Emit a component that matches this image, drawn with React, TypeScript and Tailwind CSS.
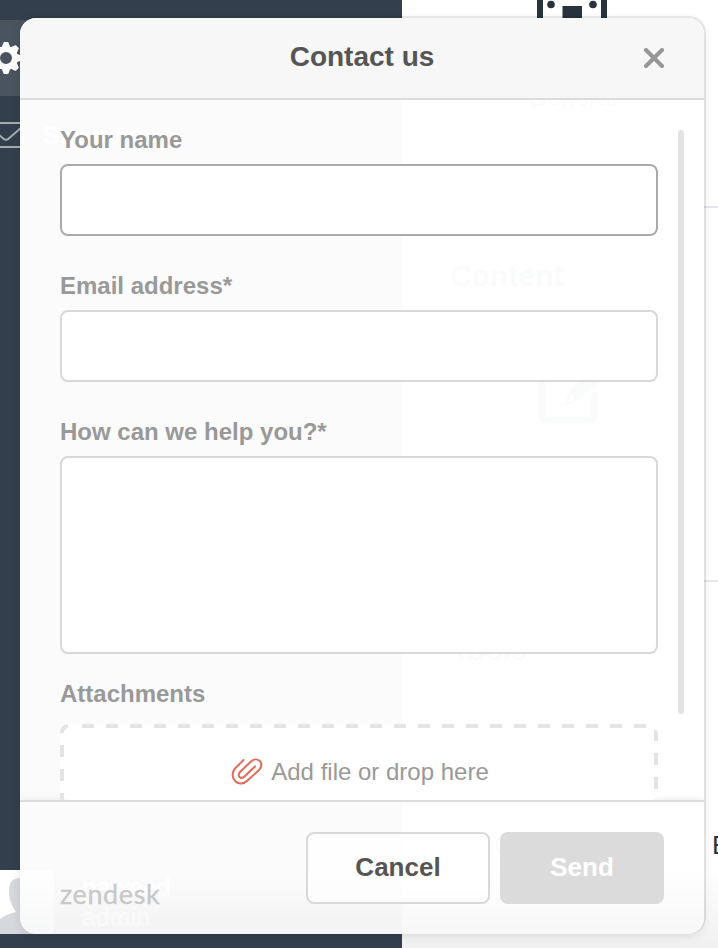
import React from "react";

const TEETH = [0, 45, 90, 135, 180, 225, 270, 315];

function Gear() {
  return (
    <svg className="block" width="32" height="32" viewBox="-16 -16 32 32" fill="#fff">
      <circle r="9" fill="none" stroke="#fff" strokeWidth="6" />
      {TEETH.map((angle) => (
        <path key={angle} d="M-4.500-10L-2.600-15.300Q-2.300-16-1.600-16H1.600Q2.300-16 2.600-15.300L4.500-10Z" transform={`rotate(${angle})`} />
      ))}
    </svg>
  );
}

function Sidebar() {
  return (
    <aside className="flex h-full w-[402px] shrink-0 flex-col bg-[#333f4d] pt-5 text-white">
      <div className="flex h-[76px] items-center bg-[#4a545f]">
        <div className="-ml-[10px]">
          <Gear />
        </div>
      </div>
      <div className="flex h-[78px] items-center">
        <svg className="-ml-[12px] block" width="36" height="26" viewBox="0 0 36 26" fill="none" stroke="#a5abb3" strokeWidth="2">
          <rect x="1" y="1" width="34" height="24" />
          <path d="M2 5L15.500 16.800Q18 18.500 20.500 16.800L34 5" />
        </svg>
        <span className="ml-[18px] text-[26px] font-bold">Support</span>
      </div>
      <div className="mt-auto mb-[14px] flex h-16">
        <svg className="block rounded-r-md bg-white" width="54" height="64" viewBox="0 0 54 64" fill="#d5d8dd">
          <path d="M20 8C12 8 9 13 9 21C9 31 12 36 16 42C11 43 5 45 0 49V64H54V55C45 49 37 45 29 41C32 36 34 30 34 21C34 13 29 8 20 8Z" />
        </svg>
        <div className="ml-7 flex flex-col pt-0.5 text-[25px] leading-[30px]">
          <b className="tracking-[-0.5px]">naweed</b>
          <span>admin</span>
        </div>
      </div>
    </aside>
  );
}

function Dashboard() {
  return (
    <main className="flex min-w-0 flex-1 flex-col bg-white text-[#29323f]">
      <section className="h-[208px] shrink-0 border-b-2 border-[#e6e6ee] pl-[135px]">
        <svg className="block" width="70" height="62" viewBox="0 0 70 62" fill="#29323f">
          <path d="M0 0H6V56H64V0H70V62H0Z" />
          <circle cx="14" cy="4.5" r="3.8" />
          <circle cx="56" cy="4.5" r="3.8" />
          <path d="M25.500 6H45V24H25.500Z" />
        </svg>
        <div className="-ml-[9px] pt-5 text-[25px] leading-[30px]">General</div>
      </section>
      <section className="h-[374px] shrink-0 border-b-2 border-[#e6e6ee] pl-12">
        <h2 className="pt-[50px] text-[30px] leading-9 font-bold">Content</h2>
        <svg className="mt-[70px] ml-[88px] block" width="66" height="60" viewBox="0 0 66 60">
          <path d="M44 4H10Q4 4 4 10V50Q4 56 10 56H50Q56 56 56 50V28" fill="none" stroke="#29323f" strokeWidth="7" />
          <path d="M26 42L31 28L52 7L62 16L40 37Z" fill="#29323f" />
          <path d="M29 38L33 30L38 35Z" fill="#fff" />
        </svg>
      </section>
      <section className="flex-1 pt-[50px] pl-[50px]">
        <h2 className="text-[29px] leading-9 font-bold">Tools</h2>
        <div className="mt-[161px] ml-[42px] flex w-[400px] gap-[151px] text-[26px] leading-8">
          <span className="w-[66px]">Code</span>
          <span className="ml-px">Export</span>
        </div>
      </section>
    </main>
  );
}

function Field({ label, active, tall }: { label: string; active?: boolean; tall?: boolean }) {
  return (
    <label className="block">
      <span className="block h-[38px] text-[24px] leading-[28px] font-bold text-[#999]">{label}</span>
      <span
        className={`block w-[598px] rounded-lg border-2 bg-white ${active ? "border-[#aaa]" : "border-[#d8d8d8]"} ${
          tall ? "h-[198px]" : "h-[72px]"
        }`}
      />
    </label>
  );
}

function Paperclip() {
  return (
    <svg className="block" width="32" height="28" viewBox="0 0 32 28" fill="none" stroke="#e26b5a" strokeWidth="2" strokeLinecap="round" strokeLinejoin="round">
      <path d="M12.500 2L4 10.500C.6 14.500 1 20.500 4.500 23.500C8 26.500 13 26 16.500 22.500L28 12C31 9 31 5 28.500 2.800C26 .7 22.500 1 20 3.500L9.500 13.500C7 16 7.500 18 8.600 19C10 20.200 12 20 13.500 18.500L24 8.500" />
    </svg>
  );
}

function AttachmentZone() {
  return (
    <div className="relative flex h-[96px] w-[598px] justify-center rounded-lg bg-white pt-[33px] pl-0.5">
      <svg className="absolute inset-0" width="598" height="96" viewBox="0 0 598 96" fill="none" stroke="#e4e4e4" strokeWidth="4">
        <path d="M2 9Q2 3 8 2" />
        <path d="M22 2H589" strokeDasharray="12 12" />
        <path d="M2 21V96" strokeDasharray="12 12" />
        <path d="M594 7.500Q596 7.500 596 10V17" />
        <path d="M596 29V66" strokeDasharray="12 12" />
      </svg>
      <div className="flex h-[30px] items-center gap-[8px] text-[24px] text-[#999]">
        <Paperclip />
        <span>Add file or drop here</span>
      </div>
    </div>
  );
}

function ContactDialog() {
  return (
    <div className="absolute top-[18px] left-[20px] flex h-[916px] w-[684px] flex-col overflow-hidden rounded-2xl bg-white/98">
      <header className="flex h-[82px] shrink-0 items-center border-b-2 border-[#dcdcdc] bg-[#f7f7f7] pb-[4px]">
        <h1 className="w-full pt-px text-center text-[28px] font-bold text-[#555]">Contact us</h1>
        <svg className="mt-[4px] mr-[39px] -ml-[60px] block shrink-0" width="21" height="21" viewBox="0 0 21 21" stroke="#969696" strokeWidth="4" strokeLinecap="round">
          <path d="M2 2L18 18M18 2L2 18" />
        </svg>
      </header>
      <div className="flex min-h-0 flex-1 overflow-hidden pl-10">
        <form className="flex w-[598px] shrink-0 flex-col pt-[26px]">
          <Field label="Your name" active />
          <div className="mt-[36px]">
            <Field label="Email address*" />
          </div>
          <div className="mt-[36px]">
            <Field label="How can we help you?*" tall />
          </div>
          <div className="mt-[26px] h-[44px] shrink-0 text-[24px] leading-[28px] font-bold text-[#999]">Attachments</div>
          <AttachmentZone />
        </form>
        <div className="mt-[30px] ml-5 h-[584px] w-[6px] shrink-0 rounded-[3px] bg-[#e3e3e3]" />
      </div>
      <footer className="flex h-[134px] shrink-0 border-t-2 border-[#dcdcdc] bg-linear-to-b from-transparent from-50% to-black/3 pt-[30px] pl-10 shadow-[0_-2px_6px_rgba(0,0,0,0.06)]">
        <div className="mt-[46px] w-[246px] font-['Lato',sans-serif] text-[27px] leading-[32px] font-normal tracking-[0.6px] text-[#c8c8c8] [-webkit-text-stroke:0.3px_#c8c8c8]">zendesk</div>
        <button className="h-[72px] w-[184px] rounded-lg border-2 border-[#d9d9d9] bg-white/70 pb-[2px] text-[26px] font-bold text-[#555]">Cancel</button>
        <button className="ml-[10px] h-[72px] w-[164px] rounded-lg bg-[#dbdbdb] pb-[2px] text-[26px] font-bold text-white">Send</button>
      </footer>
    </div>
  );
}

export default function App() {
  return (
    <div className="relative flex h-[948px] w-[718px] overflow-hidden font-['Liberation_Sans',Arial,sans-serif]">
      <Sidebar />
      <Dashboard />
      <div className="absolute right-0 bottom-0 h-[80px] w-[316px] bg-linear-to-b from-transparent to-black/6" />
      <div className="absolute top-[18px] left-[20px] h-[916px] w-[684px] rounded-2xl shadow-[1px_-1px_0_1px_rgba(0,0,0,0.08),0_2px_10px_rgba(0,0,0,0.1)]" />
      <ContactDialog />
    </div>
  );
}
